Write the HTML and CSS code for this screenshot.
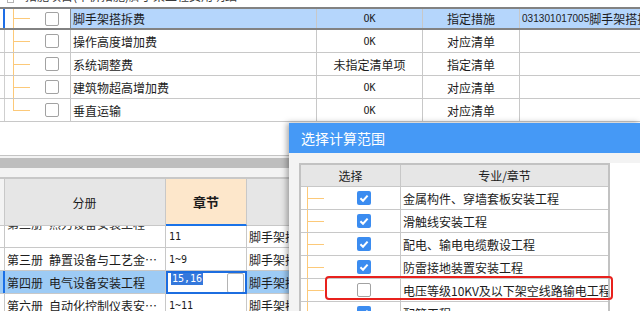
FILE: index.html
```html
<!DOCTYPE html>
<html lang="zh-CN">
<head>
<meta charset="utf-8">
<title>选择计算范围</title>
<link rel="stylesheet" href="styles.css">
</head>
<body>
<div class="app">
  <div class="top">
    <div class="prow"><span class="expander"></span><span class="ptext">措施项目(单价措施)脚手架工程费用明细</span></div>
    <div class="trow sel">
      <div class="c1 tree"><span class="cb"></span></div>
      <div class="c2">脚手架搭拆费</div>
      <div class="c3 mono">OK</div>
      <div class="c4">指定措施</div>
      <div class="c5"><span class="num">031301017005</span>脚手架搭拆费</div>
    </div>
    <div class="trow">
      <div class="c1 tree"><span class="cb"></span></div>
      <div class="c2">操作高度增加费</div>
      <div class="c3 mono">OK</div>
      <div class="c4">对应清单</div>
      <div class="c5"></div>
    </div>
    <div class="trow">
      <div class="c1 tree"><span class="cb"></span></div>
      <div class="c2">系统调整费</div>
      <div class="c3">未指定清单项</div>
      <div class="c4">指定清单</div>
      <div class="c5"></div>
    </div>
    <div class="trow">
      <div class="c1 tree"><span class="cb"></span></div>
      <div class="c2">建筑物超高增加费</div>
      <div class="c3 mono">OK</div>
      <div class="c4">对应清单</div>
      <div class="c5"></div>
    </div>
    <div class="trow">
      <div class="c1 tree last"><span class="cb"></span></div>
      <div class="c2">垂直运输</div>
      <div class="c3 mono">OK</div>
      <div class="c4">对应清单</div>
      <div class="c5"></div>
    </div>
  </div>
  <div class="blank"></div>
  <div class="hscroll"><div class="bar"></div></div>
  <div class="bottom">
    <div class="bhead">
      <div class="h1">分册</div>
      <div class="h2">章节</div>
      <div class="h3"></div>
    </div>
    <div class="brow first">
      <div class="b1"><span class="cut">第二册&ensp;热力设备安装工程</span></div>
      <div class="b2 mono">11</div>
      <div class="b3">脚手架搭拆费</div>
    </div>
    <div class="brow">
      <div class="b1">第三册&ensp;静置设备与工艺金…</div>
      <div class="b2 mono">1~9</div>
      <div class="b3">脚手架搭拆费</div>
    </div>
    <div class="brow bsel">
      <div class="b1">第四册&ensp;电气设备安装工程</div>
      <div class="b2 edit"><span class="hl mono">15,16</span><span class="dd"></span></div>
      <div class="b3">脚手架搭拆费</div>
    </div>
    <div class="brow">
      <div class="b1">第六册&ensp;自动化控制仪表安…</div>
      <div class="b2 mono">1~11</div>
      <div class="b3">脚手架搭拆费</div>
    </div>
  </div>

  <div class="dialog">
    <div class="dtitle">选择计算范围</div>
    <div class="dbody">
      <div class="dwrap">
        <div class="dtable">
          <div class="dhead"><div class="d1">选择</div><div class="d2">专业/章节</div></div>
          <div class="drow"><div class="d1 dtree"><span class="ck"><svg viewBox="0 0 14 14"><path d="M3.4 7.2l2.6 2.5 4.6-5.1" fill="none" stroke="#fff" stroke-width="2"/></svg></span></div><div class="d2">金属构件、穿墙套板安装工程</div></div>
          <div class="drow"><div class="d1 dtree"><span class="ck"><svg viewBox="0 0 14 14"><path d="M3.4 7.2l2.6 2.5 4.6-5.1" fill="none" stroke="#fff" stroke-width="2"/></svg></span></div><div class="d2">滑触线安装工程</div></div>
          <div class="drow"><div class="d1 dtree"><span class="ck"><svg viewBox="0 0 14 14"><path d="M3.4 7.2l2.6 2.5 4.6-5.1" fill="none" stroke="#fff" stroke-width="2"/></svg></span></div><div class="d2">配电、输电电缆敷设工程</div></div>
          <div class="drow"><div class="d1 dtree"><span class="ck"><svg viewBox="0 0 14 14"><path d="M3.4 7.2l2.6 2.5 4.6-5.1" fill="none" stroke="#fff" stroke-width="2"/></svg></span></div><div class="d2">防雷接地装置安装工程</div></div>
          <div class="drow"><div class="d1 dtree"><span class="cb"></span></div><div class="d2">电压等级10KV及以下架空线路输电工程</div></div>
          <div class="drow"><div class="d1 dtree"><span class="ck"><svg viewBox="0 0 14 14"><path d="M3.4 7.2l2.6 2.5 4.6-5.1" fill="none" stroke="#fff" stroke-width="2"/></svg></span></div><div class="d2">配管工程</div></div>
        </div>
      </div>
    </div>
    <div class="redbox"></div>
  </div>
</div>
</body>
</html>
```

FILE: styles.css
```css
* { box-sizing: border-box; margin: 0; padding: 0; }
html, body { width: 640px; height: 311px; overflow: hidden; background: #fff; }
body {
  font-family: "Noto Sans CJK SC", "Microsoft YaHei", sans-serif;
  font-size: 12px;
  color: #1c1c1c;
}
.app { position: relative; width: 640px; height: 311px; overflow: hidden; }

.mono { font-family: "DejaVu Sans Mono", "Liberation Mono", monospace; font-size: 10px; }
.num { font-family: "Liberation Sans", Arial, sans-serif; font-size: 10px; letter-spacing: 0.05px; }

/* ---------- top table ---------- */
.prow {
  height: 7px; overflow: hidden; display: flex; align-items: flex-start;
}
.expander {
  width: 7px; height: 12px; margin: -9px 0 0 7px;
  border: 1px solid #b4b4b4; flex: none;
}
.ptext { margin: -12px 0 0 11px; color: #3a3a3a; white-space: nowrap; line-height: 16px; }

.trow {
  display: grid;
  grid-template-columns: 71px 246px 106px 97px 1fr;
  height: 23px;
  border-bottom: 1px solid #c8c8c8;
}
.trow > div {
  border-right: 1px solid #c8c8c8;
  display: flex; align-items: center;
  overflow: hidden; white-space: nowrap;
}
.trow .c1 {
  padding-left: 45px;
  background:
    linear-gradient(#fcc979, #fcc979) 13px 0 / 1px 100% no-repeat,
    linear-gradient(#fcc979, #fcc979) 13px 11px / 17px 1px no-repeat,
    linear-gradient(#cfcfcf, #cfcfcf) 4px 0 / 1px 100% no-repeat,
    #fff;
}
.trow .c1.last {
  background:
    linear-gradient(#fcc979, #fcc979) 13px 0 / 1px 12px no-repeat,
    linear-gradient(#fcc979, #fcc979) 13px 11px / 17px 1px no-repeat,
    linear-gradient(#cfcfcf, #cfcfcf) 4px 0 / 1px 100% no-repeat,
    #fff;
}
.trow .c2 { padding-left: 2px; }
.trow .c3, .trow .c4 { justify-content: center; }
.trow .c5 { padding-left: 2px; border-right: none; }

.trow.sel {
  border-top: 2px solid #828282;
  border-bottom: 2px solid #828282;
}
.trow.sel > div:not(.c1) { background: #b5d6fc; }
.trow.sel .c1 {
  border-right-color: #8a8a8a;
  background:
    linear-gradient(#fcc979, #fcc979) 13px 0 / 1px 100% no-repeat,
    linear-gradient(#fcc979, #fcc979) 13px 9px / 17px 1px no-repeat,
    linear-gradient(#1e6ee6, #1e6ee6) 3px 0 / 2px 100% no-repeat,
    #fff;
}

.cb {
  width: 14px; height: 14px; flex: none;
  border: 1px solid #a2a2a2; border-radius: 2px; background: #fff;
}

.blank { height: 34px; border-bottom: 1px solid #c4c4c4; }
.hscroll { background: #f3f3f3; padding: 2px 0 9px; }
.hscroll .bar { height: 10px; background: #bebebe; }

/* ---------- bottom table ---------- */
.bhead {
  display: grid;
  grid-template-columns: 166px 81px 1fr;
  height: 49px;
  border-top: 2px solid #c8c8c8;
}
.bhead > div {
  display: flex; align-items: center; justify-content: center;
  border-right: 1px solid #c8c8c8;
  border-bottom: 1px solid #c8c8c8;
  background: #e6e6e6;
}
.bhead .h1 {
  padding-left: 4px;
  background:
    linear-gradient(#c8c8c8, #c8c8c8) 4px 0 / 1px 100% no-repeat,
    linear-gradient(#f3f3f3, #f3f3f3) 0 0 / 4px 100% no-repeat,
    #e6e6e6;
}
.bhead .h2 {
  background: #fde7cb;
  font-weight: bold; font-size: 13px;
  border-bottom: 2px solid #1a73e8;
}

.brow {
  display: grid;
  grid-template-columns: 166px 81px 1fr;
  height: 23px;
}
.brow.first { height: 22px; }
.brow > div {
  border-right: 1px solid #c8c8c8;
  border-bottom: 1px solid #c8c8c8;
  display: flex; align-items: center;
  white-space: nowrap; overflow: hidden;
  padding-left: 3px;
}
.brow .b1 {
  padding-left: 7px;
  background: linear-gradient(#c8c8c8, #c8c8c8) 4px 0 / 1px 100% no-repeat, #fff;
}
.brow .b3 { padding-left: 2px; border-right: none; }
.brow.first .b1 { align-items: flex-start; }
.brow.first .cut { margin-top: -10px; line-height: 16px; color: #333; }

.brow.bsel .b1 {
  background: linear-gradient(#1a6fe6, #1a6fe6) 3px 0 / 2px 100% no-repeat, #9dcbf5;
}
.brow.bsel .b3 { background: #9dcbf5; }
.brow .b2.edit {
  border: 2px solid #1c6de0;
  padding: 0 1px 0 3px;
  align-items: flex-start;
}
.hl {
  background: #3478dc; color: #fff;
  line-height: 12px; height: 12px; padding: 0 1px;
}
.dd {
  margin-left: auto; align-self: center;
  width: 17px; height: 20px;
  border: 1px solid #b4b4b4; border-radius: 2px; background: #fff;
}

/* ---------- dialog ---------- */
.dialog {
  position: absolute; left: 289px; top: 123px; right: 0; bottom: 0;
  display: flex; flex-direction: column;
  background: #f3f3f3;
  box-shadow: -2px 0 6px rgba(0, 0, 0, 0.35);
}
.dtitle {
  height: 30px; background: #4599f6; color: #fff;
  font-size: 14px; line-height: 30px; padding-left: 12px;
}
.dbody { flex: 1; display: flex; padding: 10px 0 0 10px; }
.dwrap { flex: 1; background: #fff; }
.dtable { width: 311px; border: 2px solid #c2c2c2; border-bottom: none; }
.dhead, .drow {
  display: grid;
  grid-template-columns: 100px 1fr;
  height: 23px;
}
.dhead { height: 22px; }
.dhead > div {
  background: #e6e6e6;
  display: flex; align-items: center; justify-content: center;
  border-bottom: 1px solid #c8c8c8;
}
.dhead .d1 { border-right: 1px solid #c8c8c8; }
.drow > div {
  display: flex; align-items: center;
  border-bottom: 1px solid #c8c8c8;
  white-space: nowrap; overflow: hidden;
}
.drow .d1 {
  border-right: 1px solid #c8c8c8;
  padding-left: 56px;
  background:
    linear-gradient(#fcc979, #fcc979) 6px 0 / 1px 100% no-repeat,
    linear-gradient(#fcc979, #fcc979) 6px 11px / 17px 1px no-repeat,
    #fff;
}
.drow .d2 { padding-left: 2px; }
.ck {
  width: 14px; height: 14px; flex: none;
  border-radius: 2px; background: #3b8cf0;
  display: flex;
}
.ck svg { width: 14px; height: 14px; }

.redbox {
  position: absolute; left: 36px; top: 153px;
  width: 288px; height: 24px;
  border: 2px solid #e8211d; border-radius: 4px;
}
```
